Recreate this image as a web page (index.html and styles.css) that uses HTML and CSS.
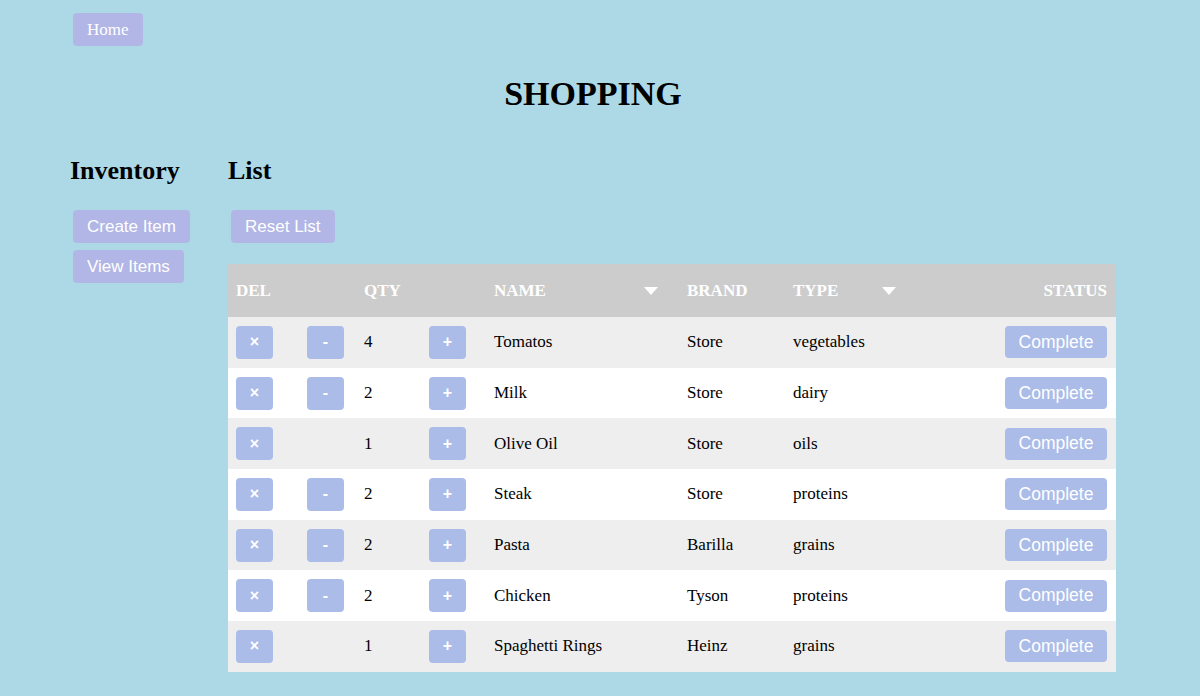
FILE: index.html
```html
<!DOCTYPE html>
<html>
<head>
<meta charset="utf-8">
<link rel="stylesheet" href="styles.css">
</head>
<body>
<div class="page">
  <nav class="nav"><button class="btn btn-home">Home</button></nav>
  <h1 class="title">SHOPPING</h1>
  <div class="layout">
    <aside class="side">
      <h2 class="heading">Inventory</h2>
      <div class="side-buttons">
        <button class="btn btn-sans">Create Item</button>
        <button class="btn btn-sans">View Items</button>
      </div>
    </aside>
    <main class="main">
      <h2 class="heading">List</h2>
      <div class="main-buttons">
        <button class="btn btn-sans">Reset List</button>
      </div>
      <table class="list">
        <colgroup>
          <col class="c-del"><col class="c-minus"><col class="c-qty"><col class="c-plus"><col class="c-name"><col class="c-brand"><col class="c-type"><col class="c-status">
        </colgroup>
        <thead>
          <tr>
            <th>DEL</th>
            <th></th>
            <th>QTY</th>
            <th></th>
            <th><div class="th-sort"><span>NAME</span><span class="tri"></span></div></th>
            <th>BRAND</th>
            <th><div class="th-sort"><span>TYPE</span><span class="tri"></span></div></th>
            <th class="right">STATUS</th>
          </tr>
        </thead>
        <tbody>
          <tr><td><button class="sq">×</button></td><td><button class="sq">-</button></td><td>4</td><td><button class="sq">+</button></td><td>Tomatos</td><td>Store</td><td>vegetables</td><td class="right"><button class="complete">Complete</button></td></tr>
          <tr><td><button class="sq">×</button></td><td><button class="sq">-</button></td><td>2</td><td><button class="sq">+</button></td><td>Milk</td><td>Store</td><td>dairy</td><td class="right"><button class="complete">Complete</button></td></tr>
          <tr><td><button class="sq">×</button></td><td></td><td>1</td><td><button class="sq">+</button></td><td>Olive Oil</td><td>Store</td><td>oils</td><td class="right"><button class="complete">Complete</button></td></tr>
          <tr><td><button class="sq">×</button></td><td><button class="sq">-</button></td><td>2</td><td><button class="sq">+</button></td><td>Steak</td><td>Store</td><td>proteins</td><td class="right"><button class="complete">Complete</button></td></tr>
          <tr><td><button class="sq">×</button></td><td><button class="sq">-</button></td><td>2</td><td><button class="sq">+</button></td><td>Pasta</td><td>Barilla</td><td>grains</td><td class="right"><button class="complete">Complete</button></td></tr>
          <tr><td><button class="sq">×</button></td><td><button class="sq">-</button></td><td>2</td><td><button class="sq">+</button></td><td>Chicken</td><td>Tyson</td><td>proteins</td><td class="right"><button class="complete">Complete</button></td></tr>
          <tr><td><button class="sq">×</button></td><td></td><td>1</td><td><button class="sq">+</button></td><td>Spaghetti Rings</td><td>Heinz</td><td>grains</td><td class="right"><button class="complete">Complete</button></td></tr>
        </tbody>
      </table>
    </main>
  </div>
</div>
</body>
</html>
```

FILE: styles.css
```css
html, body {
  margin: 0;
  padding: 0;
  background: #add8e6;
  font-family: "Liberation Serif", "Times New Roman", serif;
  color: #000;
}

.page {
  padding: 13px 84px 0 70px;
}

.nav {
  display: flex;
  height: 33px;
}

.btn {
  border: none;
  border-radius: 4px;
  background: #b1b6e6;
  color: #fff;
  height: 33px;
  padding: 0 14px;
  margin: 0 3px;
  cursor: pointer;
}

.btn-home {
  font-family: "Liberation Serif", "Times New Roman", serif;
  font-size: 17px;
}

.btn-sans {
  font-family: "Liberation Sans", Arial, sans-serif;
  font-size: 17px;
}

.title {
  margin: 28px 0 0;
  font-size: 34px;
  font-weight: bold;
  text-align: center;
  line-height: 40px;
}

.layout {
  display: flex;
  margin-top: 42px;
}

.side {
  width: 158px;
  flex: none;
}

.main {
  flex: 1;
}

.heading {
  margin: 0;
  font-size: 26px;
  line-height: 30px;
  font-weight: bold;
}

.side-buttons {
  display: flex;
  flex-direction: column;
  align-items: flex-start;
  gap: 7px;
  margin-top: 24px;
}

.main-buttons {
  display: flex;
  margin-top: 24px;
}

.list {
  margin-top: 21px;
  width: 888px;
  border-collapse: collapse;
  table-layout: fixed;
  font-size: 17px;
}

.c-del { width: 71px; }
.c-minus { width: 57px; }
.c-qty { width: 65px; }
.c-plus { width: 65px; }
.c-name { width: 193px; }
.c-brand { width: 106px; }
.c-type { width: 121px; }
.c-status { width: auto; }

.list th {
  background: #cccccc;
  color: #fff;
  font-weight: bold;
  text-align: left;
  height: 53px;
  padding: 0 8px;
  box-sizing: border-box;
}

.list td {
  height: 50.7px;
  padding: 0 8px;
  box-sizing: border-box;
}

.list tbody tr:nth-child(odd) td { background: #eeeeee; }
.list tbody tr:nth-child(even) td { background: #ffffff; }

.list .right { text-align: right; padding-right: 9px; }

.th-sort {
  display: flex;
  justify-content: space-between;
  align-items: center;
}

.tri {
  width: 0;
  height: 0;
  border-left: 7.5px solid transparent;
  border-right: 7.5px solid transparent;
  border-top: 8px solid #fff;
  margin-right: 13px;
}

.list th:nth-child(7) .tri { margin-right: 2px; }

.sq {
  width: 37px;
  height: 33px;
  border: none;
  border-radius: 4px;
  background: #abbce8;
  color: #fff;
  font-family: "Liberation Sans", Arial, sans-serif;
  font-size: 16px;
  font-weight: bold;
  padding: 0;
  display: block;
}

.complete {
  height: 32px;
  width: 102px;
  border: none;
  border-radius: 4px;
  background: #abbce8;
  color: #fff;
  font-family: "Liberation Sans", Arial, sans-serif;
  font-size: 17.5px;
  padding: 0;
}
```
